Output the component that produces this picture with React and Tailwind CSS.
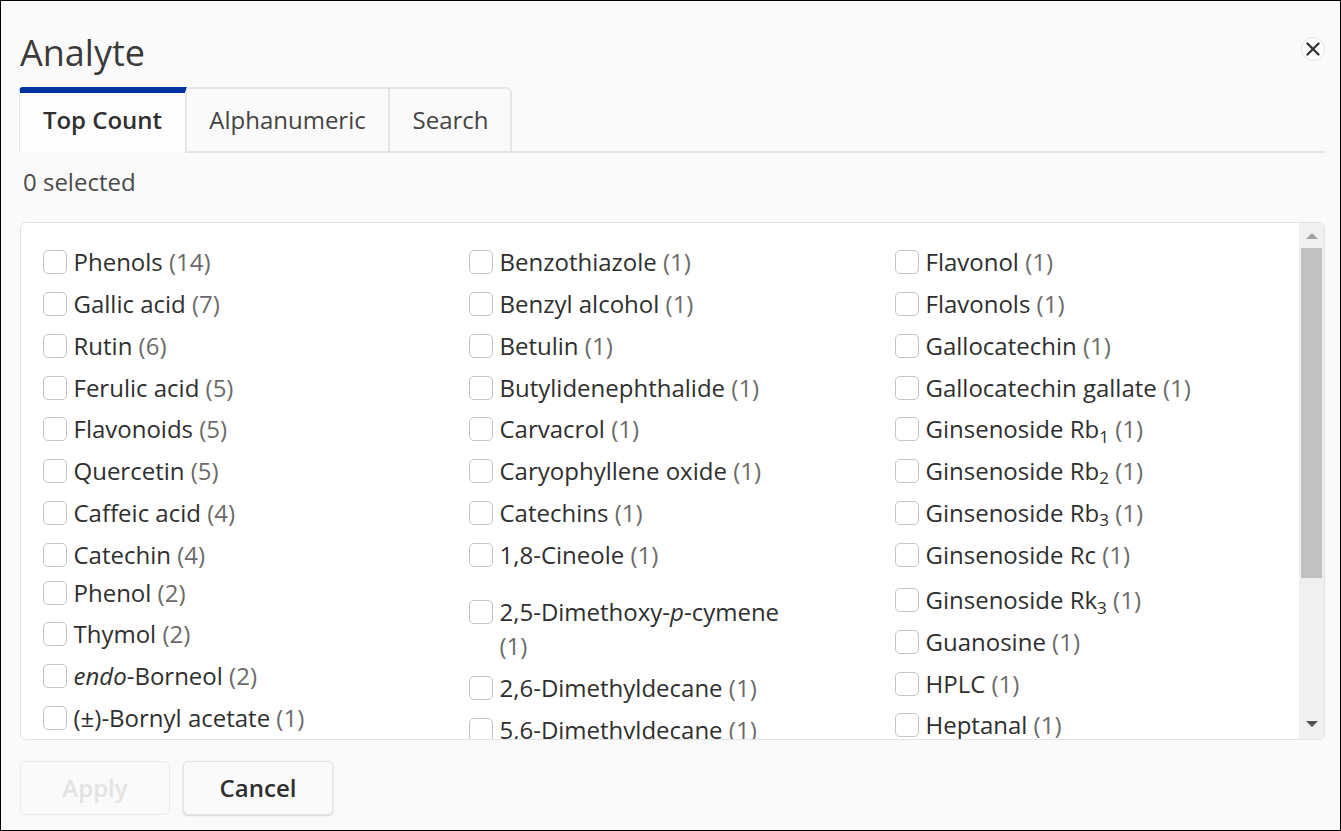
import React from 'react';
import { X } from 'lucide-react';

const columns = [
    [
        { name: 'Phenols', count: 14 },
        { name: 'Gallic acid', count: 7 },
        { name: 'Rutin', count: 6 },
        { name: 'Ferulic acid', count: 5 },
        { name: 'Flavonoids', count: 5 },
        { name: 'Quercetin', count: 5 },
        { name: 'Caffeic acid', count: 4 },
        { name: 'Catechin', count: 4 },
        { name: 'Phenol', count: 2, cls: '-mt-[3px]' },
        { name: 'Thymol', count: 2, cls: '-mt-[1px]' },
        { name: <><i>endo</i>-Borneol</>, count: 2 },
        { name: '(±)-Bornyl acetate', count: 1 },
    ],
    [
        { name: 'Benzothiazole', count: 1 },
        { name: 'Benzyl alcohol', count: 1 },
        { name: 'Betulin', count: 1 },
        { name: 'Butylidenephthalide', count: 1 },
        { name: 'Carvacrol', count: 1 },
        { name: 'Caryophyllene oxide', count: 1 },
        { name: 'Catechins', count: 1 },
        { name: '1,8-Cineole', count: 1 },
        { name: <>2,5-Dimethoxy-<i>p</i>-cymene</>, count: 1, wrap: true },
        { name: '2,6-Dimethyldecane', count: 1 },
        { name: '5,6-Dimethyldecane', count: 1 },
    ],
    [
        { name: 'Flavonol', count: 1 },
        { name: 'Flavonols', count: 1 },
        { name: 'Gallocatechin', count: 1 },
        { name: 'Gallocatechin gallate', count: 1 },
        { name: <>Ginsenoside Rb<sub className="text-[17px]">1</sub></>, count: 1 },
        { name: <>Ginsenoside Rb<sub className="text-[17px]">2</sub></>, count: 1 },
        { name: <>Ginsenoside Rb<sub className="text-[17px]">3</sub></>, count: 1 },
        { name: 'Ginsenoside Rc', count: 1 },
        { name: <>Ginsenoside Rk<sub className="text-[17px]">3</sub></>, count: 1, cls: 'mt-[4px]' },
        { name: 'Guanosine', count: 1 },
        { name: 'HPLC', count: 1 },
        { name: 'Heptanal', count: 1, cls: '-mt-[1px]' },
    ],
];

const Row = ({ item }) => {
    if (item.wrap) {
        return (
            <div className="flex items-start h-[92px] pt-[19px]">
                <span className="w-6 h-6 mt-[5px] mr-[6.5px] shrink-0 rounded-[5px] border border-[#c4c4c4] bg-white" />
                <span className="leading-[34px] w-[310px]">
                    {item.name}
                    <br />
                    <span className="text-[#6b6b6b]">({item.count})</span>
                </span>
            </div>
        );
    }
    return (
        <div className={`flex items-center h-[41.75px] ${item.cls || ''}`}>
            <span className="w-6 h-6 mr-[6.5px] shrink-0 rounded-[5px] border border-[#c4c4c4] bg-white" />
            <span className="whitespace-nowrap leading-[30px]">
                {item.name} <span className="text-[#6b6b6b]">({item.count})</span>
            </span>
        </div>
    );
};

export default function App() {
    return (
        <div className="w-[1341px] h-[831px] border border-black bg-[#fafafa] pl-[18px] pr-[15px] overflow-hidden text-[#333] font-['Open_Sans',sans-serif] flex flex-col">
            {/* Header */}
            <div className="flex items-start justify-between h-[86px] shrink-0">
                <h1 className="text-[36px] leading-[48px] mt-[28px] ml-px text-[#3a3a3a]">Analyte</h1>
                <button className="w-6 h-6 rounded-full border border-[#e2e2e2] bg-white flex items-center justify-center mt-[36px]">
                    <X size={22} strokeWidth={2.6} className="text-[#333] shrink-0" />
                </button>
            </div>

            {/* Tabs */}
            <div className="flex h-[66px] border-b-2 border-[#e6e6e6] text-[24px] shrink-0">
                <div className="w-[168px] h-[66px] -mb-[2px] bg-[#fdfdfd] border-t-[6px] border-t-[#0033a0] border-l border-l-[#e6e6e6] border-r-2 border-r-[#e6e6e6] rounded-tl-[4px] flex items-center justify-center font-semibold text-[#2f2f2f] pb-[7px]">
                    Top Count
                </div>
                <div className="w-[203px] border-t-2 border-r-2 border-[#e6e6e6] flex items-center justify-center bg-[#fafafa] text-[#444]">
                    Alphanumeric
                </div>
                <div className="w-[122px] pl-px border-t-2 border-r-2 border-[#e6e6e6] rounded-tr-[6px] flex items-center justify-center bg-[#fafafa] text-[#444]">
                    Search
                </div>
            </div>

            <div className="h-[69px] pt-[12px] pl-[4px] text-[24px] leading-[34px] text-[#4a4a4a] shrink-0">0 selected</div>

            {/* List panel */}
            <div className="h-[518px] ml-px flex border border-[#e3e3e3] rounded-[6px] bg-white overflow-hidden shrink-0">
                <div className="flex-1 flex pl-[22px] pt-[18.5px] text-[24px] text-[#2f2f2f] overflow-hidden">
                    {columns.map((col, i) => (
                        <div key={i} className="w-[426px] shrink-0">
                            {col.map((item, j) => (
                                <Row key={j} item={item} />
                            ))}
                        </div>
                    ))}
                </div>
                <div className="w-[25px] bg-[#f0f0f0] flex flex-col items-center shrink-0">
                    <svg width="12" height="6" viewBox="0 0 12 6" className="mt-[10px] shrink-0"><path d="M6 0 12 6H0z" fill="#a3a3a3" /></svg>
                    <div className="w-[21px] h-[330px] mt-[9px] bg-[#c1c1c1] shrink-0" />
                    <svg width="12" height="6" viewBox="0 0 12 6" className="mt-[143px] shrink-0"><path d="M0 0H12L6 6z" fill="#505050" /></svg>
                </div>
            </div>

            {/* Footer */}
            <div className="flex gap-[13px] mt-[21px] ml-px">
                <button className="w-[150px] h-[54px] rounded-[5px] border border-[#ececec] bg-[#fafafa] text-[24px] font-semibold text-[#e3e3e3]">Apply</button>
                <button className="w-[150px] h-[54px] rounded-[5px] border border-[#e3e3e3] bg-[#fafafa] shadow-[0_1px_2px_rgba(0,0,0,0.15)] text-[24px] font-semibold text-[#2f2f2f]">Cancel</button>
            </div>
        </div>
    );
}
